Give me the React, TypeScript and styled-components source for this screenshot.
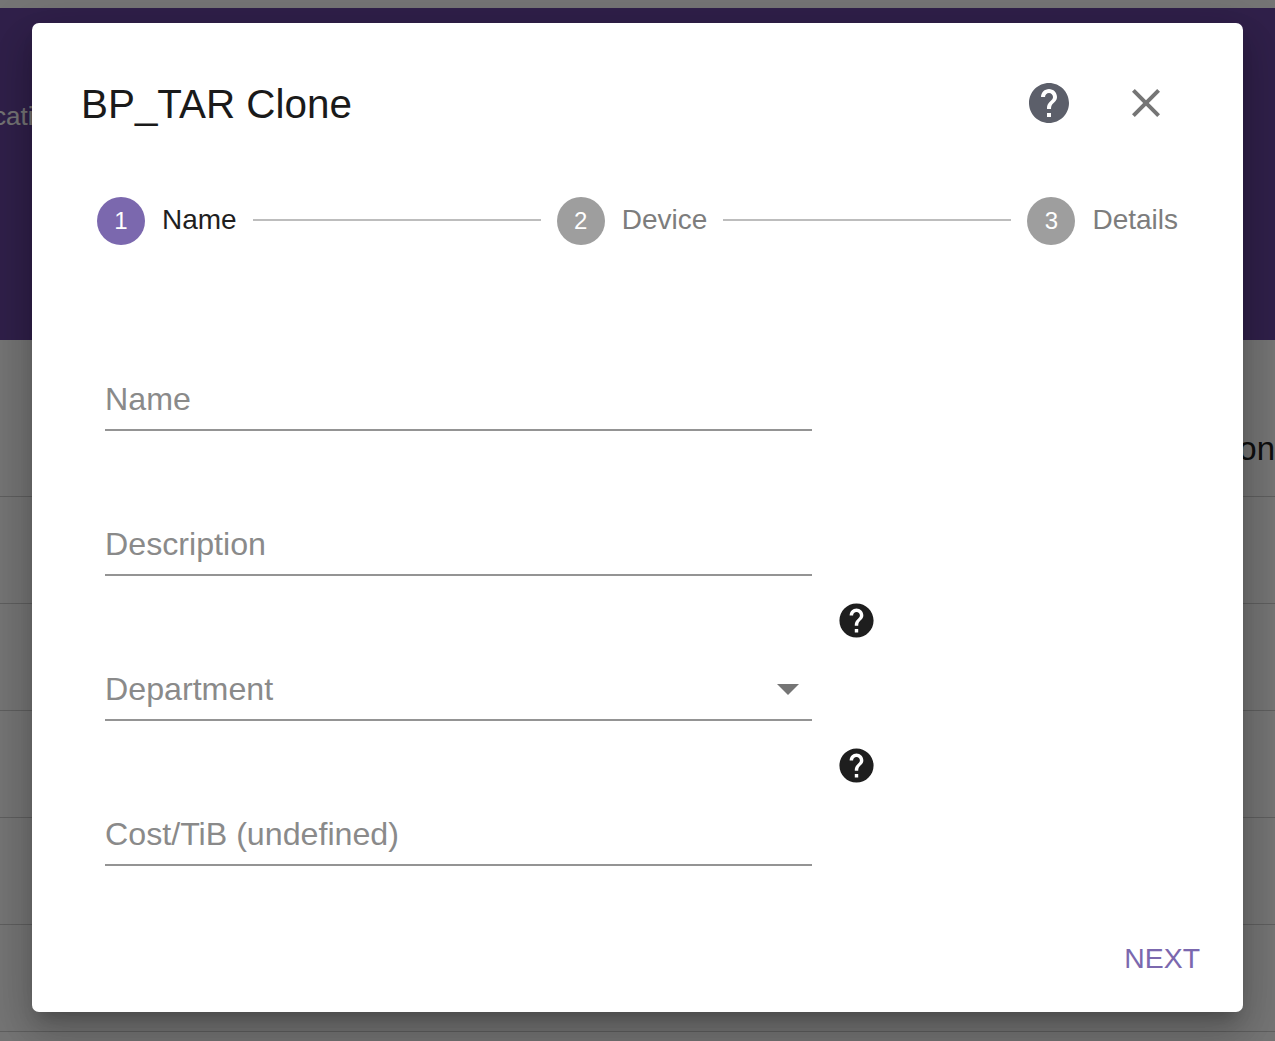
import styled, {createGlobalStyle} from "styled-components";

const GlobalStyle = createGlobalStyle`
    html, body {
        margin: 0;
        padding: 0;
        height: 100%;
        background: #fff;
        font-family: "Liberation Sans", Arial, sans-serif;
    }
`

const Page = styled.div`
    position: relative;
    width: 1275px;
    height: 1041px;
    overflow: hidden;
    background: #fff;
`

const TopStrip = styled.div`
    height: 8px;
`

const Banner = styled.div`
    height: 332px;
    background: #6a46a1;
    color: #fff;
    font-size: 26px;
    line-height: 38px;
    padding-top: 89px;
    box-sizing: border-box;
`

const BannerText = styled.div`
    margin-left: -7px;
`

const TableHead = styled.div`
    height: 157px;
    box-sizing: border-box;
    border-bottom: 1px solid #d0d0d0;
    padding-top: 90px;
    display: flex;
    justify-content: flex-end;
    font-size: 33px;
    line-height: 38px;
    color: #212121;
`

const TableRow = styled.div`
    height: 107px;
    box-sizing: border-box;
    border-bottom: 1px solid #d0d0d0;
`

const Overlay = styled.div`
    position: absolute;
    inset: 0;
    background: rgba(0, 0, 0, 0.54);
    padding: 23px 32px 29px;
    box-sizing: border-box;
`

const Dialog = styled.div`
    height: 989px;
    background: #fff;
    border-radius: 7px;
    display: flex;
    flex-direction: column;
    box-shadow: 0 11px 15px -7px rgba(0, 0, 0, 0.2),
        0 24px 38px 3px rgba(0, 0, 0, 0.14),
        0 9px 46px 8px rgba(0, 0, 0, 0.12);
`

const Header = styled.div`
    display: flex;
    align-items: center;
    height: 48px;
    margin-top: 56px;
    padding: 0 73px 0 49px;
`

const Title = styled.h2`
    flex: 1;
    margin: 2px 0 0;
    font-size: 40.4px;
    font-weight: 400;
    color: #1a1a1a;
`

const HeaderActions = styled.div`
    display: flex;
    align-items: center;
    gap: 49px;
`

const HeaderIcon = styled.svg<{ $color: string }>`
    display: block;
    width: 48px;
    height: 48px;
    fill: ${p => p.$color};
`

const Stepper = styled.div`
    display: flex;
    align-items: center;
    margin-top: 70px;
    padding: 0 65px;
`

const StepCircle = styled.div<{ $active?: boolean }>`
    flex: none;
    width: 48px;
    height: 48px;
    border-radius: 50%;
    background: ${p => p.$active ? "#7b68ae" : "#9e9e9e"};
    color: #fff;
    font-size: 24px;
    display: flex;
    align-items: center;
    justify-content: center;
`

const StepLabel = styled.span<{ $active?: boolean }>`
    flex: none;
    margin-left: 17px;
    margin-top: -3px;
    font-size: 28px;
    color: ${p => p.$active ? "#1f1f1f" : "#7d7d7d"};
`

const StepLine = styled.div`
    flex: 1;
    height: 2px;
    margin: -2px 16px 0;
    background: #bdbdbd;
`

const Form = styled.div`
    margin-top: 41px;
    padding-left: 73px;
`

const FormRow = styled.div`
    height: 145px;
    display: flex;
    align-items: flex-end;
`

const Field = styled.div`
    width: 706.5px;
    height: 60px;
    box-sizing: border-box;
    border-bottom: 2px solid #949494;
    padding-bottom: 2px;
    display: flex;
    align-items: center;
    justify-content: space-between;
    font-size: 32.2px;
    color: #8a8a8a;
`

const DropArrow = styled.span`
    width: 0;
    height: 0;
    margin-right: 13px;
    border-left: 11px solid transparent;
    border-right: 11px solid transparent;
    border-top: 11px solid #757575;
`

const FieldHelp = styled.svg`
    align-self: flex-start;
    width: 41px;
    height: 41px;
    margin: 24px 0 0 24px;
    fill: #1e1e1e;
`

const Footer = styled.div`
    margin-top: auto;
    padding: 0 43px 37px 0;
    display: flex;
    justify-content: flex-end;
`

const NextButton = styled.button`
    border: 0;
    padding: 0;
    background: none;
    font-family: inherit;
    font-size: 28.4px;
    color: #7b68ae;
`

const helpPath = "M12 2C6.48 2 2 6.48 2 12s4.48 10 10 10 10-4.48 10-10S17.52 2 12 2zm1 17h-2v-2h2v2zm2.07-7.75l-.9.92C13.45 12.9 13 13.5 13 15h-2v-.5c0-1.1.45-2.1 1.17-2.83l1.24-1.26c.37-.36.59-.86.59-1.41 0-1.1-.9-2-2-2s-2 .9-2 2H8c0-2.21 1.79-4 4-4s4 1.79 4 4c0 .88-.36 1.68-.93 2.25z"
const closePath = "M19 6.41L17.59 5 12 10.59 6.41 5 5 6.41 10.59 12 5 17.59 6.41 19 12 13.41 17.59 19 19 17.59 13.41 12z"

const fields = [
    {label: "Name"},
    {label: "Description"},
    {label: "Department", select: true, help: true},
    {label: "Cost/TiB (undefined)", help: true},
]

export default function App() {
    return (
        <Page>
            <GlobalStyle/>
            <TopStrip/>
            <Banner>
                <BannerText>cati</BannerText>
            </Banner>
            <TableHead>on</TableHead>
            {[0, 1, 2, 3, 4].map(i => <TableRow key={i}/>)}

            <Overlay>
                <Dialog>
                    <Header>
                        <Title>BP_TAR Clone</Title>
                        <HeaderActions>
                            <HeaderIcon $color="#5c5f6a" viewBox="0 0 24 24"><path d={helpPath}/></HeaderIcon>
                            <HeaderIcon $color="#757575" viewBox="0 0 24 24"><path d={closePath}/></HeaderIcon>
                        </HeaderActions>
                    </Header>

                    <Stepper>
                        <StepCircle $active>1</StepCircle>
                        <StepLabel $active>Name</StepLabel>
                        <StepLine/>
                        <StepCircle>2</StepCircle>
                        <StepLabel>Device</StepLabel>
                        <StepLine/>
                        <StepCircle>3</StepCircle>
                        <StepLabel>Details</StepLabel>
                    </Stepper>

                    <Form>
                        {fields.map(f =>
                            <FormRow key={f.label}>
                                <Field>
                                    {f.label}
                                    {f.select && <DropArrow/>}
                                </Field>
                                {f.help && <FieldHelp viewBox="0 0 24 24"><path d={helpPath}/></FieldHelp>}
                            </FormRow>)}
                    </Form>

                    <Footer>
                        <NextButton>NEXT</NextButton>
                    </Footer>
                </Dialog>
            </Overlay>
        </Page>
    )
}
